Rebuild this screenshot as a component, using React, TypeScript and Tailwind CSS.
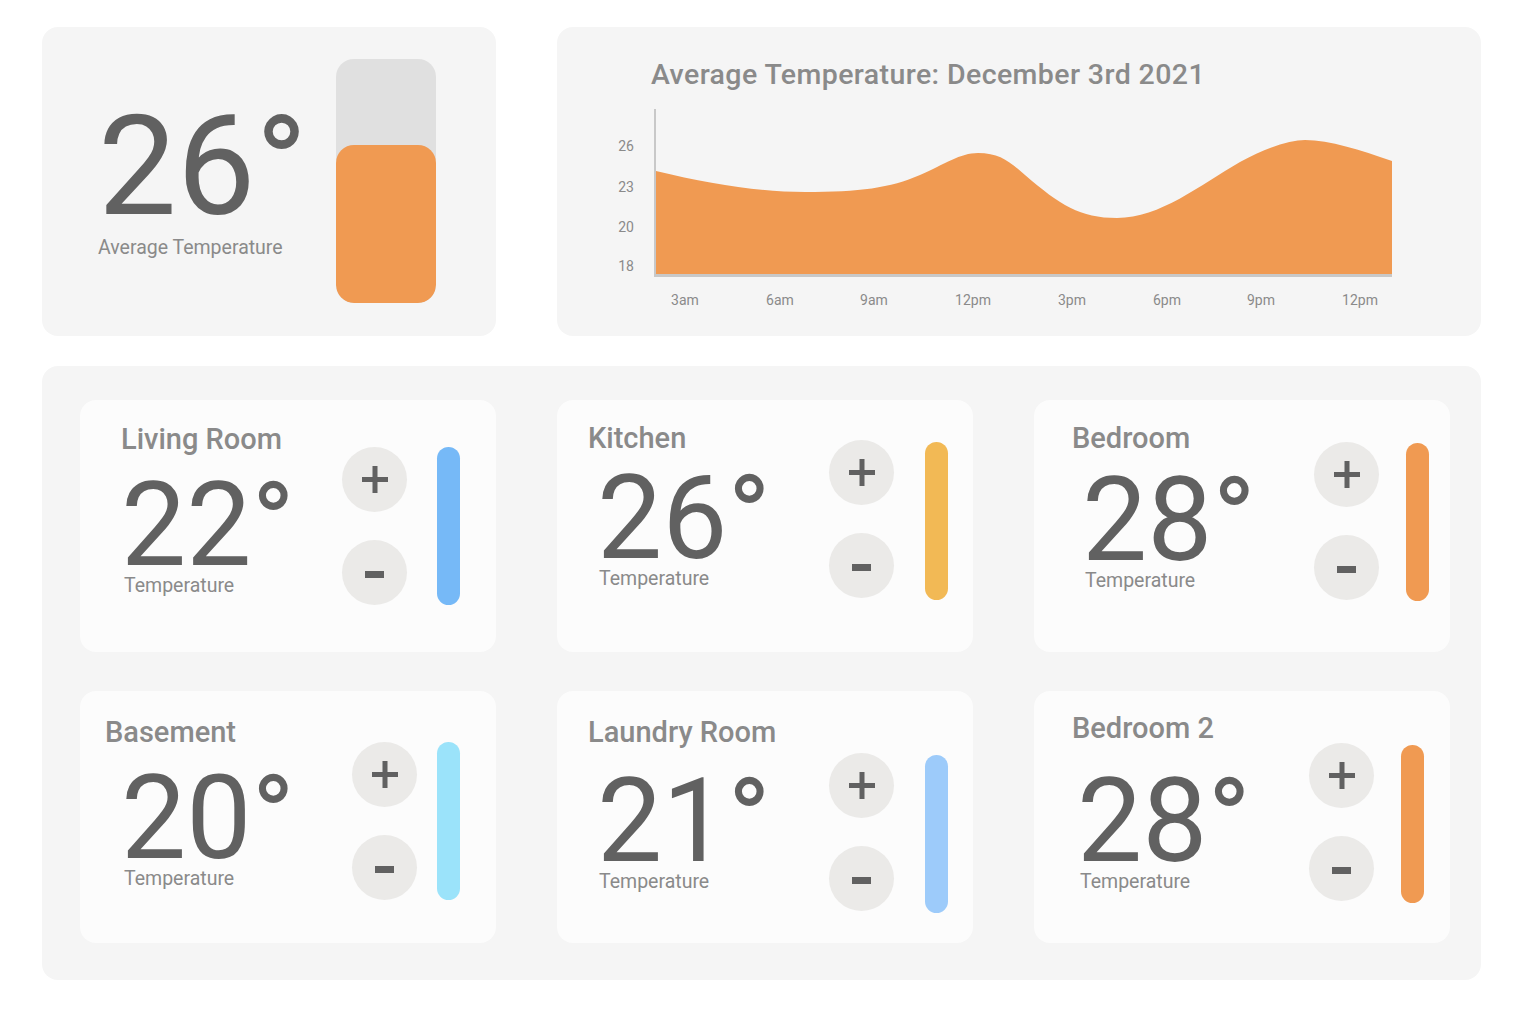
const rooms = [
  {
    name: "Living Room",
    temp: 22,
    bar: "bg-[#76b9f7]",
    col: "w-[262px] pl-[41px] pt-[22px]",
    num: "mt-[19px]",
    label: "ml-[3px]",
    btns: "mt-[47px]",
    barPos: "ml-[30px] mt-[47px]",
  },
  {
    name: "Kitchen",
    temp: 26,
    bar: "bg-[#f2b955]",
    col: "w-[272px] pl-[31px] pt-[21px]",
    num: "mt-[13px] ml-[9px]",
    label: "ml-[11px]",
    btns: "mt-[40px]",
    barPos: "ml-[31px] mt-[42px]",
  },
  {
    name: "Bedroom",
    temp: 28,
    bar: "bg-[#f09a52]",
    col: "w-[280px] pl-[38px] pt-[21px]",
    num: "mt-[15px] ml-[10px]",
    label: "ml-[13px]",
    btns: "mt-[42px]",
    barPos: "ml-[27px] mt-[43px]",
  },
  {
    name: "Basement",
    temp: 20,
    bar: "bg-[#9be3fa]",
    col: "w-[272px] pl-[25px] pt-[24px]",
    num: "mt-[19px] ml-[16px]",
    label: "ml-[19px]",
    btns: "mt-[51px]",
    barPos: "ml-[20px] mt-[51px]",
  },
  {
    name: "Laundry Room",
    temp: 21,
    bar: "bg-[#9dcbfa]",
    col: "w-[272px] pl-[31px] pt-[24px]",
    num: "mt-[22px] ml-[9px]",
    label: "ml-[11px]",
    btns: "mt-[62px]",
    barPos: "ml-[31px] mt-[64px]",
  },
  {
    name: "Bedroom 2",
    temp: 28,
    bar: "bg-[#f09a52]",
    col: "w-[275px] pl-[38px] pt-[20px]",
    num: "mt-[26px] ml-[5px]",
    label: "ml-[8px]",
    btns: "mt-[52px]",
    barPos: "ml-[27px] mt-[54px]",
  },
];

const yTicks = [
  { v: "26", y: 50.7 },
  { v: "23", y: 91.7 },
  { v: "20", y: 131.7 },
  { v: "18", y: 171 },
];

const xTicks = [
  { v: "3am", x: 85 },
  { v: "6am", x: 180 },
  { v: "9am", x: 274 },
  { v: "12pm", x: 373 },
  { v: "3pm", x: 472 },
  { v: "6pm", x: 567 },
  { v: "9pm", x: 661 },
  { v: "12pm", x: 760 },
];

function PlusIcon() {
  return (
    <svg width="26" height="27" viewBox="0 0 26 27">
      <rect x="0" y="11" width="26" height="5" fill="#616161" />
      <rect x="10.5" y="0" width="5" height="27" fill="#616161" />
    </svg>
  );
}

function MinusIcon() {
  return (
    <svg width="19" height="7" viewBox="0 0 19 7" className="translate-y-[2px]">
      <rect x="0" y="0" width="19" height="7" fill="#616161" />
    </svg>
  );
}

function RoomCard({ room }: { room: (typeof rooms)[number] }) {
  return (
    <div className="flex h-[252px] rounded-[16px] bg-[#fcfcfc]">
      <div className={`shrink-0 ${room.col}`}>
        <div className="text-[29px] leading-[34px] font-medium text-[#8a8a8a]">
          {room.name}
        </div>
        <div className={`text-[116px] leading-[100px] text-[#616161] ${room.num}`}>
          {room.temp}°
        </div>
        <div className={`text-[19.5px] leading-[22px] text-[#8a8a8a] ${room.label}`}>
          Temperature
        </div>
      </div>
      <div className={`flex flex-col gap-[28px] ${room.btns}`}>
        <button className="flex h-[65px] w-[65px] items-center justify-center rounded-full bg-[#ebeae8]">
          <PlusIcon />
        </button>
        <button className="flex h-[65px] w-[65px] items-center justify-center rounded-full bg-[#ebeae8]">
          <MinusIcon />
        </button>
      </div>
      <div className={`h-[158px] w-[23px] rounded-full ${room.bar} ${room.barPos}`} />
    </div>
  );
}

export default function App() {
  return (
    <div className="min-h-screen bg-white pt-[27px] pl-[42px] font-['Roboto',sans-serif]">
      {/* Top row */}
      <div className="flex gap-[61px]">
        <div className="flex h-[309px] w-[454px] rounded-[16px] bg-[#f5f5f5] pl-[56px]">
          <div className="w-[238px] shrink-0 pt-[69px]">
            <div className="text-[140px] leading-none text-[#616161]">26°</div>
            <div className="text-[19.5px] leading-[24px] text-[#8a8a8a]">
              Average Temperature
            </div>
          </div>
          <div className="mt-[32px] flex h-[244px] w-[100px] flex-col justify-end overflow-hidden rounded-[18px] bg-[#e0e0e0]">
            <div className="h-[158px] rounded-[18px] bg-[#f09a52]" />
          </div>
        </div>

        <div className="flex h-[309px] w-[924px] flex-col rounded-[16px] bg-[#f5f5f5]">
          <div className="pl-[94px] pt-[31px] text-[28.5px] leading-[34px] tracking-[0.4px] font-medium text-[#8a8a8a]">
            Average Temperature: December 3rd 2021
          </div>
          <svg
            width="810"
            height="215"
            viewBox="0 0 810 215"
            className="ml-[43px] mt-[8px] block"
          >
            <path
              d="M56,71 C110,84 160,92 205,92 C260,92 290,88 320,75 C345,64 360,53 378,53 C400,53 410,62 425,75 C460,105 480,118 517,118 C560,118 600,85 640,62 C665,48 690,40 705,40 C730,40 760,50 792,61 L792,174 L56,174 Z"
              fill="#f09a52"
            />
            <rect x="54" y="9" width="2" height="168" fill="#c8c8c8" />
            <rect x="54" y="174" width="738" height="3" fill="#c8c8c8" />
            {yTicks.map((t) => (
              <text
                key={t.v}
                x="26"
                y={t.y}
                textAnchor="middle"
                fontSize="14"
                fontFamily="Roboto, sans-serif"
                fill="#8a8a8a"
              >
                {t.v}
              </text>
            ))}
            {xTicks.map((t, i) => (
              <text
                key={i}
                x={t.x}
                y="205"
                textAnchor="middle"
                fontSize="14"
                fontFamily="Roboto, sans-serif"
                fill="#8a8a8a"
              >
                {t.v}
              </text>
            ))}
          </svg>
        </div>
      </div>

      {/* Rooms */}
      <div className="mt-[30px] h-[614px] w-[1439px] rounded-[16px] bg-[#f5f5f5] pl-[38px] pt-[34px]">
        <div className="grid grid-cols-[416px_416px_416px] gap-x-[61px] gap-y-[39px]">
          {rooms.map((room) => (
            <RoomCard key={room.name} room={room} />
          ))}
        </div>
      </div>
    </div>
  );
}
